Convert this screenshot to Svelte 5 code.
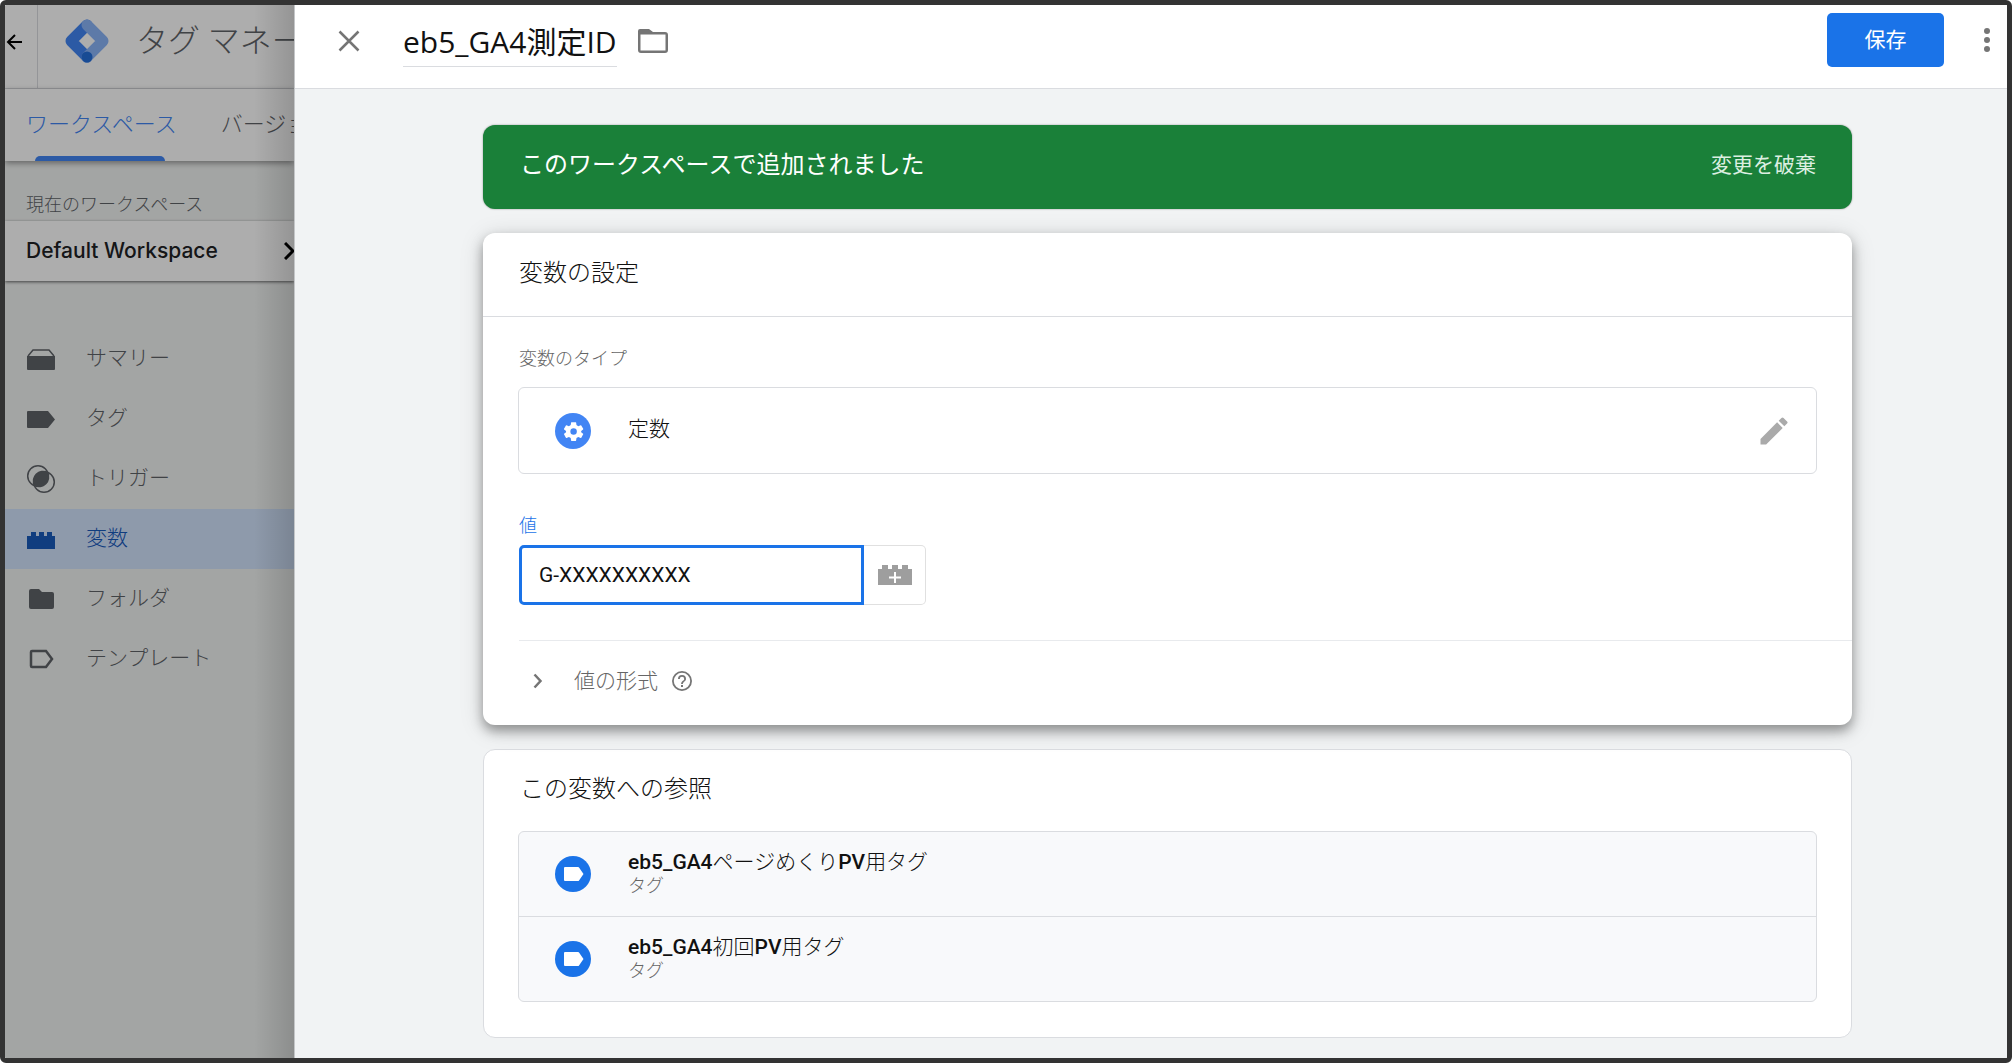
<script>
  let name = $state('eb5_GA4測定ID');
  let value = $state('G-XXXXXXXXXX');

  const menu = [
    { id: 'summary', label: 'サマリー' },
    { id: 'tag', label: 'タグ' },
    { id: 'trigger', label: 'トリガー' },
    { id: 'variable', label: '変数', active: true },
    { id: 'folder', label: 'フォルダ' },
    { id: 'template', label: 'テンプレート' }
  ];

  const references = [
    { title: 'eb5_GA4ページめくりPV用タグ', type: 'タグ' },
    { title: 'eb5_GA4初回PV用タグ', type: 'タグ' }
  ];

  // 英数字だけ太字にするため、タイトルを英数字とそれ以外に分ける
  const split = (title) => title.match(/\w+|\W+/g);
  const isLatin = (part) => /^\w/.test(part);
</script>

<div class="frame">
  <div class="base">
    <header class="topbar">
      <button class="back" aria-label="戻る">
        <svg width="18" height="18" viewBox="0 0 18 18" fill="none" stroke="#000" stroke-width="2">
          <path d="M17 9H3M10 2L3 9l7 7" />
        </svg>
      </button>
      <div class="brand">
        <svg width="44" height="44" viewBox="0 0 44 44" fill="none" stroke-width="11" stroke-linecap="round" stroke-linejoin="round">
          <path d="M22 6 6 22l16 16" stroke="#4285f4" />
          <path d="m22 6 16 16-16 16" stroke="#8ab4f8" />
          <circle cx="22" cy="38" r="5.500" fill="#246fdb" />
        </svg>
        <span>タグ マネージャー</span>
      </div>
    </header>

    <nav class="tabs">
      <a class="tab current" href="#workspace">ワークスペース</a>
      <a class="tab" href="#versions">バージョン</a>
    </nav>

    <div class="side">
      <p class="side-label">現在のワークスペース</p>
      <button class="workspace">
        <span>Default Workspace</span>
        <svg width="10" height="18" viewBox="0 0 10 18" fill="none" stroke="#000" stroke-width="3">
          <path d="m1 1 8 8-8 8" />
        </svg>
      </button>

      <ul class="menu">
        {#each menu as item (item.id)}
          <li>
            <a href="#{item.id}" class:active={item.active}>
              <svg width="30" height="30" viewBox="0 0 30 30" fill="currentColor">
                {#if item.id === 'summary'}
                  <path d="M1 12h28v13a1 1 0 0 1-1 1H2a1 1 0 0 1-1-1z" />
                  <path d="M2 12 7 6h16l5 6" fill="none" stroke="currentColor" stroke-width="1.5" />
                {:else if item.id === 'tag'}
                  <path d="M2 7h20l7 8.500-7 8.500H2a1 1 0 0 1-1-1V8a1 1 0 0 1 1-1z" />
                {:else if item.id === 'trigger'}
                  <circle cx="12" cy="12" r="10.300" fill="none" stroke="currentColor" stroke-width="1.500" />
                  <circle cx="18" cy="18" r="10.300" fill="none" stroke="currentColor" stroke-width="1.500" />
                  <path d="M22 8A10.300 10.300 0 0 0 8 22 10.300 10.300 0 0 0 22 8z" />
                {:else if item.id === 'variable'}
                  <path d="M1 12h4V8h5v4h3V8h5v4h3V8h5v4h3v13H1z" />
                {:else if item.id === 'folder'}
                  <path d="M5 5h8l3 3h10a2 2 0 0 1 2 2v13a2 2 0 0 1-2 2H5a2 2 0 0 1-2-2V7a2 2 0 0 1 2-2z" />
                {:else}
                  <path d="M6 7h14l6 8-6 8H6a1 1 0 0 1-1-1V8a1 1 0 0 1 1-1z" fill="none" stroke="currentColor" stroke-width="2.500" />
                {/if}
              </svg>
              <span>{item.label}</span>
            </a>
          </li>
        {/each}
      </ul>
    </div>
    <div class="scrim"></div>
  </div>

  <main class="sheet">
    <header class="sheet-head">
      <button class="icon-btn" aria-label="閉じる">
        <svg width="22" height="22" viewBox="0 0 22 22" fill="none" stroke="#757575" stroke-width="2.500">
          <path d="m1.500 1.500 19 19M20.500 1.500l-19 19" />
        </svg>
      </button>
      <input class="name" aria-label="変数名" bind:value={name} />
      <button class="icon-btn" aria-label="フォルダ">
        <svg width="30" height="24" viewBox="0 0 30 24">
          <path d="M2 0h9l4 3h12a3 3 0 0 1 3 3v15a3 3 0 0 1-3 3H3a3 3 0 0 1-3-3V2a2 2 0 0 1 2-2zM2.500 5.500v16h25v-16z" fill="#757575" fill-rule="evenodd" />
        </svg>
      </button>
      <button class="save">保存</button>
      <button class="icon-btn more" aria-label="その他">
        <svg width="6" height="24" viewBox="0 0 6 24" fill="#757575">
          <circle cx="3" cy="3" r="3" /><circle cx="3" cy="12" r="3" /><circle cx="3" cy="21" r="3" />
        </svg>
      </button>
    </header>

    <div class="content">
      <section class="banner">
        <span>このワークスペースで追加されました</span>
        <button>変更を破棄</button>
      </section>

      <section class="card config">
        <h2>変数の設定</h2>
        <div class="config-body">
          <p class="label">変数のタイプ</p>
          <button class="type">
            <svg class="badge" width="36" height="36" viewBox="0 0 36 36">
              <circle cx="18" cy="18" r="18" fill="#4285f4" />
              <g transform="translate(4.200 4.200) scale(1.200)">
                <path
                  fill="#fff"
                  d="M18.300 12.500v-1l1.600-1.300a.4.4 0 0 0 .1-.5l-1.600-2.800a.4.4 0 0 0-.5-.2l-2 .8-1.500-.9-.3-2.100a.4.4 0 0 0-.4-.3h-3.400a.4.4 0 0 0-.4.300l-.3 2.100-1.500.9-2-.8a.4.4 0 0 0-.5.200L4 9.700a.4.4 0 0 0 .1.500l1.600 1.300v1L4.100 13.800a.4.4 0 0 0-.1.500l1.600 2.800a.4.4 0 0 0 .5.200l2-.8 1.500.9.3 2.100a.4.4 0 0 0 .4.300h3.400a.4.4 0 0 0 .4-.3l.3-2.100 1.500-.9 2 .8a.4.4 0 0 0 .5-.2l1.600-2.800a.4.4 0 0 0-.1-.5z"
                />
                <circle cx="12" cy="12" r="2.700" fill="#4285f4" />
              </g>
            </svg>
            <span>定数</span>
            <svg class="pencil" width="36" height="36" viewBox="0 0 24 24" fill="#aaa">
              <path d="M3 17.250V21h3.750L17.810 9.940l-3.750-3.750zM20.710 7.040a1 1 0 0 0 0-1.410l-2.340-2.340a1 1 0 0 0-1.410 0l-1.830 1.830 3.750 3.750z" />
            </svg>
          </button>

          <label class="label focus" for="value">値</label>
          <div class="field">
            <input id="value" bind:value />
            <button aria-label="変数を挿入">
              <svg width="34" height="20" viewBox="0 0 34 20">
                <path d="M0 4h4V0h6v4h4V0h6v4h4V0h6v4h4v16H0z" fill="#9e9e9e" />
                <path d="M17 7v11M11 12.500h12" stroke="#fff" stroke-width="2" />
              </svg>
            </button>
          </div>

          <button class="format">
            <svg width="10" height="16" viewBox="0 0 10 16" fill="none" stroke="#757575" stroke-width="2.500">
              <path d="m1.500 1.500 6 6.500-6 6.500" />
            </svg>
            <span>値の形式</span>
            <svg width="20" height="20" viewBox="2 2 20 20" fill="#757575">
              <path d="M11 18h2v-2h-2zm1-16a10 10 0 1 0 0 20 10 10 0 0 0 0-20zm0 18.200a8.200 8.200 0 1 1 0-16.400 8.200 8.200 0 0 1 0 16.400zM12 6a4 4 0 0 0-4 4h1.800a2.200 2.200 0 0 1 4.400 0c0 2-3.100 1.800-3.100 5h1.800c0-2.200 3.100-2.500 3.100-5a4 4 0 0 0-4-4z" />
            </svg>
          </button>
        </div>
      </section>

      <section class="card refs">
        <h2>この変数への参照</h2>
        <ul>
          {#each references as ref (ref.title)}
            <li>
              <svg class="badge" width="36" height="36" viewBox="0 0 36 36">
                <circle cx="18" cy="18" r="18" fill="#1a73e8" />
                <path d="M10 11h13a1 1 0 0 1 1 .5l4.500 6.500-4.500 6.500a1 1 0 0 1-1 .5H10a1 1 0 0 1-1-1V12a1 1 0 0 1 1-1z" fill="#fff" />
              </svg>
              <div>
                <a href="#tag">{#each split(ref.title) as part}<span class:latin={isLatin(part)}>{part}</span>{/each}</a>
                <small>{ref.type}</small>
              </div>
            </li>
          {/each}
        </ul>
      </section>
    </div>
  </main>
</div>

<style>
  :global(body) {
    margin: 0;
    background: #fff;
  }

  .frame {
    display: flex;
    box-sizing: border-box;
    min-height: 100vh;
    border: 5px solid #333;
    border-radius: 6px;
    overflow: hidden;
    font-family: Roboto, 'Noto Sans CJK JP', sans-serif;
    font-weight: 300;
    font-size: 21px;
    line-height: 24px;
    color: #111;
  }

  button,
  input {
    box-sizing: border-box;
    margin: 0;
    padding: 0;
    border: 0;
    background: none;
    font: inherit;
    color: inherit;
  }

  button {
    display: flex;
    align-items: center;
    text-align: left;
    cursor: pointer;
  }

  a {
    color: inherit;
    text-decoration: none;
  }

  p,
  h2,
  ul {
    margin: 0;
    padding: 0;
    list-style: none;
    font-weight: 300;
  }

  svg {
    flex: none;
  }

  /* 背面の画面 */
  .base {
    position: relative;
    display: flex;
    flex-direction: column;
    flex: 0 0 289px;
    overflow: hidden;
    background: #f1f3f2;
    color: #5f6368;
    white-space: nowrap;
  }

  .scrim {
    position: absolute;
    inset: 0;
    background: linear-gradient(to left, rgba(0, 0, 0, 0.14), transparent 40px), rgba(0, 0, 0, 0.32);
  }

  .topbar {
    display: flex;
    height: 83px;
    background: #fff;
    border-bottom: 1px solid #dadce0;
  }

  .back {
    flex: none;
    width: 33px;
    padding-bottom: 10px;
    border-right: 1px solid #dadce0;
  }

  .brand {
    display: flex;
    align-items: center;
    gap: 27px;
    padding: 0 0 12px 27px;
    font-size: 32px;
    line-height: 40px;
  }

  .tabs {
    position: relative;
    display: flex;
    gap: 44px;
    height: 72px;
    padding-left: 21px;
    background: #fff;
    box-shadow: 0 2px 6px rgba(0, 0, 0, 0.4);
    font-size: 22px;
  }

  .tab {
    display: flex;
    flex-direction: column;
    justify-content: space-between;
    padding-top: 24px;
  }

  .current {
    color: #4285f4;
  }

  .current::after {
    content: '';
    height: 5px;
    margin: 0 12px 0 9px;
    background: #4285f4;
    border-radius: 5px 5px 0 0;
  }

  .side-label {
    padding: 32px 21px 4px;
    font-size: 18px;
  }

  .workspace {
    justify-content: space-between;
    width: 100%;
    height: 60px;
    padding-left: 21px;
    background: #fff;
    box-shadow: 0 1px 3px rgba(0, 0, 0, 0.6);
    font-family: Inter, sans-serif;
    font-weight: 500;
    color: #202124;
  }

  .menu {
    padding-top: 48px;
  }

  .menu a {
    display: flex;
    align-items: center;
    gap: 30px;
    height: 60px;
    padding-left: 21px;
  }

  .menu span {
    padding-bottom: 2px;
  }

  .menu .active {
    background: #d2e3fc;
    color: #185abc;
  }

  /* 編集シート */
  .sheet {
    flex: 1;
    min-width: 0;
    background: #f1f3f4;
    border-left: 1px solid #c4c6c8;
  }

  .sheet-head {
    display: flex;
    align-items: center;
    height: 83px;
    padding: 0 17px 0 43px;
    background: #fff;
    border-bottom: 1px solid #dadce0;
  }

  .icon-btn {
    padding-bottom: 12px;
  }

  .more {
    padding-bottom: 14px;
  }

  .name {
    width: 214px;
    height: 40px;
    margin: 0 21px 0 43px;
    padding-bottom: 12px;
    border-bottom: 1px solid #dadce0;
    font-family: 'Open Sans', 'Noto Sans CJK JP', sans-serif;
    font-size: 30px;
    font-weight: 400;
  }

  .save {
    justify-content: center;
    width: 117px;
    height: 54px;
    margin: 0 40px 14px auto;
    border-radius: 5px;
    background: #1a73e8;
    color: #fff;
    font-weight: 400;
  }

  .content {
    display: flex;
    flex-direction: column;
    gap: 24px;
    padding: 36px 155px 20px 188px;
  }

  .banner {
    display: flex;
    align-items: center;
    justify-content: space-between;
    box-sizing: border-box;
    height: 84px;
    padding: 0 36px 4px 37px;
    border-radius: 12px;
    background: #1a8039;
    box-shadow: 0 0 2px rgba(0, 0, 0, 0.4);
    color: #fff;
    font-size: 24px;
    font-weight: 400;
  }

  .banner button {
    font-size: 21px;
    color: #dcefe1;
  }

  .card {
    background: #fff;
    border-radius: 12px;
  }

  .card h2 {
    padding-left: 36px;
    font-size: 24px;
    line-height: 30px;
  }

  .config {
    position: relative;
    box-shadow: 0 6px 12px rgba(0, 0, 0, 0.35), 0 4px 24px rgba(0, 0, 0, 0.15);
  }

  .config h2 {
    padding-top: 25px;
    padding-bottom: 28px;
    border-bottom: 1px solid #dadce0;
  }

  .config-body {
    padding: 30px 35px 0;
  }

  .label {
    display: block;
    padding-left: 1px;
    font-size: 18px;
    color: #666;
  }

  .focus {
    margin-top: 40px;
    color: #1a73e8;
  }

  .type {
    width: 100%;
    height: 87px;
    margin-top: 16px;
    padding: 0 24px 0 36px;
    border: 1px solid #dadce0;
    border-radius: 6px;
  }

  .type span {
    padding-bottom: 4px;
  }

  .badge {
    margin-right: 37px;
  }

  .pencil {
    margin-left: auto;
  }

  .field {
    display: flex;
    height: 60px;
    margin-top: 7px;
    padding-left: 1px;
  }

  .field input {
    width: 345px;
    padding-left: 17px;
    border: 3px solid #1a73e8;
    border-radius: 5px 0 0 5px;
    outline: none;
    font-weight: 400;
  }

  .field button {
    justify-content: center;
    width: 62px;
    border: 1px solid #e0e0e0;
    border-left: 0;
    border-radius: 0 5px 5px 0;
  }

  .format {
    width: calc(100% + 34px);
    height: 85px;
    margin: 35px 0 0 1px;
    padding: 0 0 4px 14px;
    border-top: 1px solid #e8eaed;
    color: #666;
  }

  .format span {
    margin: 0 14px 0 31px;
  }

  .refs {
    border: 1px solid #dadce0;
    padding-bottom: 35px;
  }

  .refs h2 {
    padding: 24px 36px 27px;
  }

  .refs ul {
    margin: 0 34px;
    border: 1px solid #dadce0;
    border-radius: 6px;
    background: #f8f9fb;
  }

  .refs li {
    display: flex;
    align-items: center;
    height: 84px;
    padding-left: 36px;
  }

  .refs li + li {
    border-top: 1px solid #dadce0;
  }

  .refs a {
    display: block;
  }

  .latin {
    font-weight: 500;
  }

  .refs small {
    display: block;
    font-size: 18px;
    color: #666;
  }
</style>
